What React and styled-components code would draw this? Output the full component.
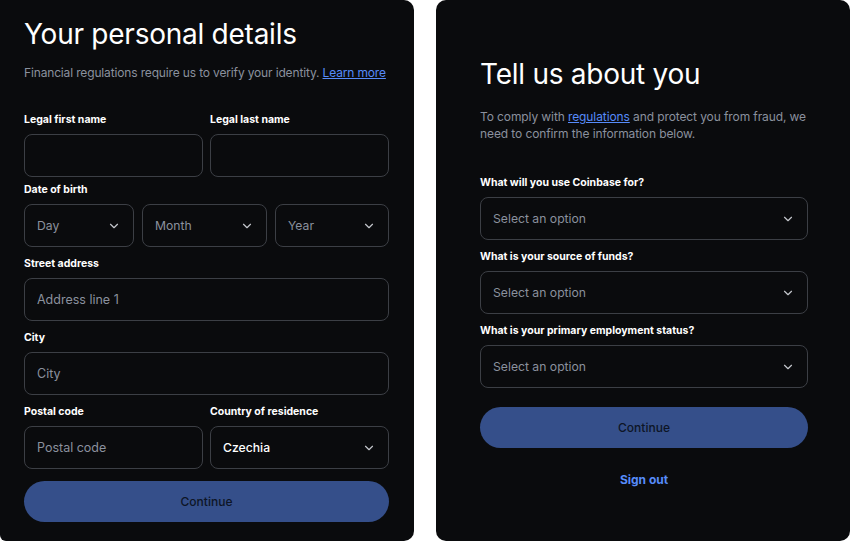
import React from "react";
import styled, { createGlobalStyle } from "styled-components";
import { ChevronDown } from "lucide-react";

const GlobalStyle = createGlobalStyle`
  html, body {
    margin: 0;
    padding: 0;
    background: #ffffff;
  }
  * {
    box-sizing: border-box;
  }
`;

const Field = ({ label, children }) => (
  <FieldBox>
    <Label>{label}</Label>
    {children}
  </FieldBox>
);

const Select = ({ value, placeholder }) => (
  <SelectBox type="button">
    <SelectText $filled={!!value}>{value || placeholder}</SelectText>
    <ChevronDown size={14} strokeWidth={2} />
  </SelectBox>
);

const App = () => {
  return (
    <Page>
      <GlobalStyle />
      <Card $left>
        <Title>Your personal details</Title>
        <Intro $top="12px" $nowrap>
          Financial regulations require us to verify your identity.{" "}
          <a href="#learn">Learn more</a>
        </Intro>
        <Form $top="32px">
          <Row $cols="1fr 1fr" $after="-4px">
            <Field label="Legal first name">
              <Input />
            </Field>
            <Field label="Legal last name">
              <Input />
            </Field>
          </Row>
          <Field label="Date of birth">
            <Row $cols="110px 125px 1fr" $gap="8px">
              <Select placeholder="Day" />
              <Select placeholder="Month" />
              <Select placeholder="Year" />
            </Row>
          </Field>
          <Field label="Street address">
            <Input placeholder="Address line 1" />
          </Field>
          <Field label="City">
            <Input placeholder="City" />
          </Field>
          <Row $cols="1fr 1fr">
            <Field label="Postal code">
              <Input placeholder="Postal code" />
            </Field>
            <Field label="Country of residence">
              <Select value="Czechia" />
            </Field>
          </Row>
          <Continue type="button" $top="2px">
            Continue
          </Continue>
        </Form>
      </Card>

      <Card>
        <Title>Tell us about you</Title>
        <Intro $top="16px">
          To comply with <a href="#regs">regulations</a> and protect you from
          fraud, we need to confirm the information below.
        </Intro>
        <Form $top="34px">
          <Field label="What will you use Coinbase for?">
            <Select placeholder="Select an option" />
          </Field>
          <Field label="What is your source of funds?">
            <Select placeholder="Select an option" />
          </Field>
          <Field label="What is your primary employment status?">
            <Select placeholder="Select an option" />
          </Field>
          <Continue type="button" $top="9px">
            Continue
          </Continue>
          <SignOut href="#signout">Sign out</SignOut>
        </Form>
      </Card>
    </Page>
  );
};

const Page = styled.main`
  display: flex;
  gap: 22px;
  width: 850px;
  height: 541px;
  font-family: Inter, "Liberation Sans", sans-serif;
`;

const Card = styled.section`
  width: 414px;
  height: 541px;
  background: #0a0b0d;
  color: #ffffff;
  border-radius: ${(p) => (p.$left ? "0 10px 10px 6px" : "10px")};
  padding: ${(p) => (p.$left ? "16px 25px 0 24px" : "56px 42px 0 44px")};
  display: flex;
  flex-direction: column;
`;

const Title = styled.h1`
  margin: 0;
  font-size: 28px;
  line-height: 36px;
  font-weight: 400;
  letter-spacing: -0.25px;
  color: #ffffff;
`;

const Intro = styled.p`
  margin: ${(p) => p.$top} 0 0;
  font-size: 12px;
  line-height: 17px;
  letter-spacing: ${(p) => (p.$nowrap ? "-0.15px" : "-0.1px")};
  white-space: ${(p) => (p.$nowrap ? "nowrap" : "normal")};
  color: #8a919e;

  a {
    color: #578bfa;
    text-decoration: underline;
  }
`;

const Form = styled.div`
  margin-top: ${(p) => p.$top};
  display: flex;
  flex-direction: column;
  gap: 10px;
`;

const Row = styled.div`
  display: grid;
  grid-template-columns: ${(p) => p.$cols};
  gap: ${(p) => p.$gap || "7px"};
  margin-bottom: ${(p) => p.$after || "0"};
`;

const FieldBox = styled.div`
  display: flex;
  flex-direction: column;
  gap: 7px;
`;

const Label = styled.label`
  font-size: 10.5px;
  line-height: 14px;
  font-weight: 700;
  color: #ffffff;
`;

const Input = styled.input`
  height: 43px;
  width: 100%;
  border: 1px solid #3c3f45;
  border-radius: 8px;
  background: #0a0b0d;
  padding: 0 12px;
  font-family: inherit;
  font-size: 12.5px;
  color: #ffffff;
  outline: none;

  &::placeholder {
    color: #8a919e;
  }
`;

const SelectBox = styled.button`
  height: 43px;
  width: 100%;
  border: 1px solid #3c3f45;
  border-radius: 8px;
  background: #0a0b0d;
  padding: 0 12px 0 12px;
  display: flex;
  align-items: center;
  justify-content: space-between;
  font-family: inherit;
  color: #c4c7cc;
  cursor: pointer;
`;

const SelectText = styled.span`
  font-size: 12.2px;
  color: ${(p) => (p.$filled ? "#ffffff" : "#8a919e")};
  font-weight: ${(p) => (p.$filled ? 500 : 400)};
`;

const Continue = styled.button`
  margin-top: ${(p) => p.$top};
  height: 41px;
  width: 100%;
  border: none;
  border-radius: 21px;
  background: #354f8a;
  color: #0d1526;
  font-family: inherit;
  font-size: 12px;
  font-weight: 500;
  cursor: pointer;
`;

const SignOut = styled.a`
  margin-top: 14px;
  align-self: center;
  font-size: 12px;
  font-weight: 700;
  color: #578bfa;
  text-decoration: none;
`;

export default App;
